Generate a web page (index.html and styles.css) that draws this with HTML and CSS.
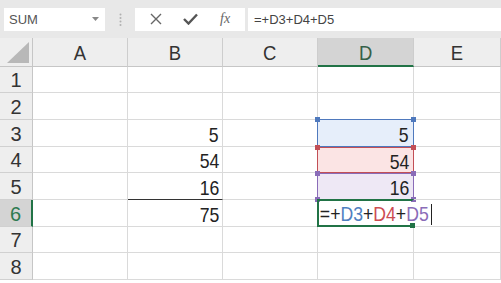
FILE: index.html
```html
<!DOCTYPE html>
<html lang="en">
<head>
    <meta charset="UTF-8">
    <meta name="viewport" content="width=device-width, initial-scale=1.0">
    <title>SUM formula</title>
    <link rel="stylesheet" href="styles.css">
</head>
<body>
    <div class="toolbar">
        <div class="name-box">
            <span>SUM</span>
            <svg width="7" height="4" viewBox="0 0 7 4"><path d="M0 0h7L3.5 4z" fill="#888"/></svg>
        </div>
        <div class="grip">
            <svg width="3" height="13" viewBox="0 0 3 13"><circle cx="1.5" cy="1.5" r="1" fill="#b0b0b0"/><circle cx="1.5" cy="5" r="1" fill="#b0b0b0"/><circle cx="1.5" cy="8.5" r="1" fill="#b0b0b0"/><circle cx="1.5" cy="12" r="1" fill="#b0b0b0"/></svg>
        </div>
        <div class="fx-box">
            <svg width="12" height="12" viewBox="0 0 12 12"><path d="M1 1l10 10M11 1L1 11" stroke="#666" stroke-width="1.4" fill="none"/></svg>
            <svg width="15" height="12" viewBox="0 0 15 12"><path d="M1 6l4.5 4.5L14 1.5" stroke="#555" stroke-width="2.4" fill="none"/></svg>
            <span class="fx">fx</span>
        </div>
        <div class="formula-box">=+D3+D4+D5</div>
    </div>

    <div class="sheet">
        <div class="corner"><svg width="22" height="21" viewBox="0 0 22 21"><path d="M22 0V21H0z" fill="#b8b8b8"/></svg></div>
        <div class="col-head"><span>A</span></div>
        <div class="col-head"><span>B</span></div>
        <div class="col-head"><span>C</span></div>
        <div class="col-head active"><span>D</span></div>
        <div class="col-head"><span>E</span></div>

        <div class="row-head">1</div>
        <div class="cell"></div><div class="cell"></div><div class="cell"></div><div class="cell"></div><div class="cell"></div>

        <div class="row-head">2</div>
        <div class="cell"></div><div class="cell"></div><div class="cell"></div><div class="cell"></div><div class="cell"></div>

        <div class="row-head">3</div>
        <div class="cell"></div><div class="cell num"><span>5</span></div><div class="cell no-right"></div>
        <div class="cell num ref ref-blue"><i class="dot tl"></i><i class="dot tr"></i><span>5</span></div>
        <div class="cell"></div>

        <div class="row-head">4</div>
        <div class="cell"></div><div class="cell num"><span>54</span></div><div class="cell no-right"></div>
        <div class="cell num ref ref-red"><i class="dot tl"></i><i class="dot tr"></i><span>54</span></div>
        <div class="cell"></div>

        <div class="row-head">5</div>
        <div class="cell"></div><div class="cell num no-bottom"><span>16</span></div><div class="cell no-right"></div>
        <div class="cell num ref ref-purple"><i class="dot tl"></i><i class="dot tr"></i><i class="dot bl"></i><i class="dot br"></i><span>16</span></div>
        <div class="cell"></div>

        <div class="row-head active">6</div>
        <div class="cell"></div><div class="cell num total"><span>75</span></div><div class="cell no-right"></div>
        <div class="cell editing">
            <span class="entry">=+<span class="t-blue">D3</span>+<span class="t-red">D4</span>+<span class="t-purple">D5</span></span><i class="caret"></i>
            <i class="dot br green"></i>
        </div>
        <div class="cell"></div>

        <div class="row-head">7</div>
        <div class="cell"></div><div class="cell"></div><div class="cell"></div><div class="cell"></div><div class="cell"></div>

        <div class="row-head">8</div>
        <div class="cell"></div><div class="cell"></div><div class="cell"></div><div class="cell"></div><div class="cell"></div>
    </div>
</body>
</html>
```

FILE: styles.css
```css
body {
    margin: 0;
    width: 501px;
    height: 283px;
    overflow: hidden;
    background: #ffffff;
    font-family: "Liberation Sans", Arial, sans-serif;
    color: #222;
}

/* formula bar */
.toolbar {
    display: flex;
    align-items: center;
    height: 38px;
    padding-left: 4px;
    background: #e8e8e8;
    box-sizing: border-box;
}
.name-box {
    display: flex;
    align-items: center;
    justify-content: space-between;
    width: 101px;
    height: 23px;
    padding: 0 6px 0 5px;
    box-sizing: border-box;
    background: #fff;
    font-size: 13px;
    color: #555;
}
.grip {
    display: flex;
    width: 30px;
    justify-content: center;
}
.fx-box {
    display: flex;
    align-items: center;
    justify-content: space-around;
    width: 110px;
    height: 23px;
    padding: 0 4px;
    box-sizing: border-box;
    background: #fff;
}
.fx {
    font-family: "Liberation Serif", serif;
    font-style: italic;
    font-size: 14px;
    color: #666;
}
.formula-box {
    flex: 1;
    height: 23px;
    margin-left: 3px;
    padding-left: 6px;
    line-height: 23px;
    background: #fff;
    font-size: 13px;
    color: #444;
}

/* grid */
.sheet {
    display: grid;
    grid-template-columns: 33px 95px 95px 95px 96px 87px;
    grid-template-rows: 29px 26px 27px 27px 26px 27px 27px 26px 27px;
}
.corner {
    display: flex;
    align-items: flex-end;
    justify-content: flex-end;
    padding: 0 3px 3px 0;
    background: #eeeeee;
    border-right: 1px solid #c6c6c6;
    border-bottom: 1px solid #c6c6c6;
}
.col-head {
    display: flex;
    align-items: center;
    justify-content: center;
    background: #eeeeee;
    border-right: 1px solid #cdcdcd;
    border-bottom: 1px solid #c6c6c6;
    font-size: 21px;
    color: #333;
    padding-top: 2px;
}
.col-head span {
    display: inline-block;
    transform: scaleX(0.88);
}
.col-head.active {
    background: #d4d4d4;
    border-bottom: 2px solid #217346;
    color: #356048;
}
.row-head {
    display: flex;
    align-items: center;
    justify-content: center;
    background: #eeeeee;
    border-right: 1px solid #c6c6c6;
    border-bottom: 1px solid #d0d0d0;
    font-size: 20px;
    color: #333;
    padding-top: 2px;
}
.row-head.active {
    background: #d4d4d4;
    border-right: 2px solid #217346;
    color: #2d7a50;
}
.cell {
    position: relative;
    display: flex;
    align-items: center;
    border-right: 1px solid #dadada;
    border-bottom: 1px solid #dadada;
    font-size: 21px;
}
.num {
    justify-content: flex-end;
    padding-right: 3px;
    padding-top: 3px;
}
.num span {
    display: inline-block;
    transform: scaleX(0.84);
    transform-origin: right center;
}
.no-right { border-right-color: transparent; }
.no-bottom { border-bottom-color: transparent; }
.total { border-top: 1px solid #333; margin-top: -1px; }

/* referenced ranges */
.ref {
    border: 1px solid;
    margin: -1px 0 0 -1px;
    padding-right: 4px;
}
.ref-blue { background: #e6eefa; border-color: #4f79bd; }
.ref-red { background: #fbe4e4; border-color: #c24f56; }
.ref-purple { background: #eee8f5; border-color: #8a6cb8; }
.ref-red, .ref-purple { margin-top: 0; border-top-width: 1px; }
.ref-blue .dot { background: #4f79bd; }
.ref-red .dot { background: #c24f56; }
.ref-purple .dot { background: #8a6cb8; }

.dot {
    position: absolute;
    width: 5px;
    height: 5px;
}
.dot.tl { left: -3px; top: -3px; }
.dot.tr { right: -3px; top: -3px; }
.dot.bl { left: -3px; bottom: -3px; }
.dot.br { right: -3px; bottom: -3px; }
.dot.green { background: #217346; }

/* active cell in edit mode */
.editing {
    border: 2px solid #217346;
    border-right-color: transparent;
    margin: -1px 0 0 -1px;
    overflow: visible;
    z-index: 1;
}
.entry {
    display: inline-block;
    white-space: nowrap;
    padding-left: 1px;
    padding-top: 2px;
    font-size: 21px;
    color: #222;
    transform: scaleX(0.84);
    transform-origin: left center;
    margin-right: -20px;
}
.t-blue { color: #4f7fc0; }
.t-red { color: #cc4c52; }
.t-purple { color: #8a6cb8; }
.caret {
    display: inline-block;
    flex: none;
    width: 1px;
    height: 21px;
    margin-left: 1px;
    margin-top: 2px;
    background: #222;
}
```
